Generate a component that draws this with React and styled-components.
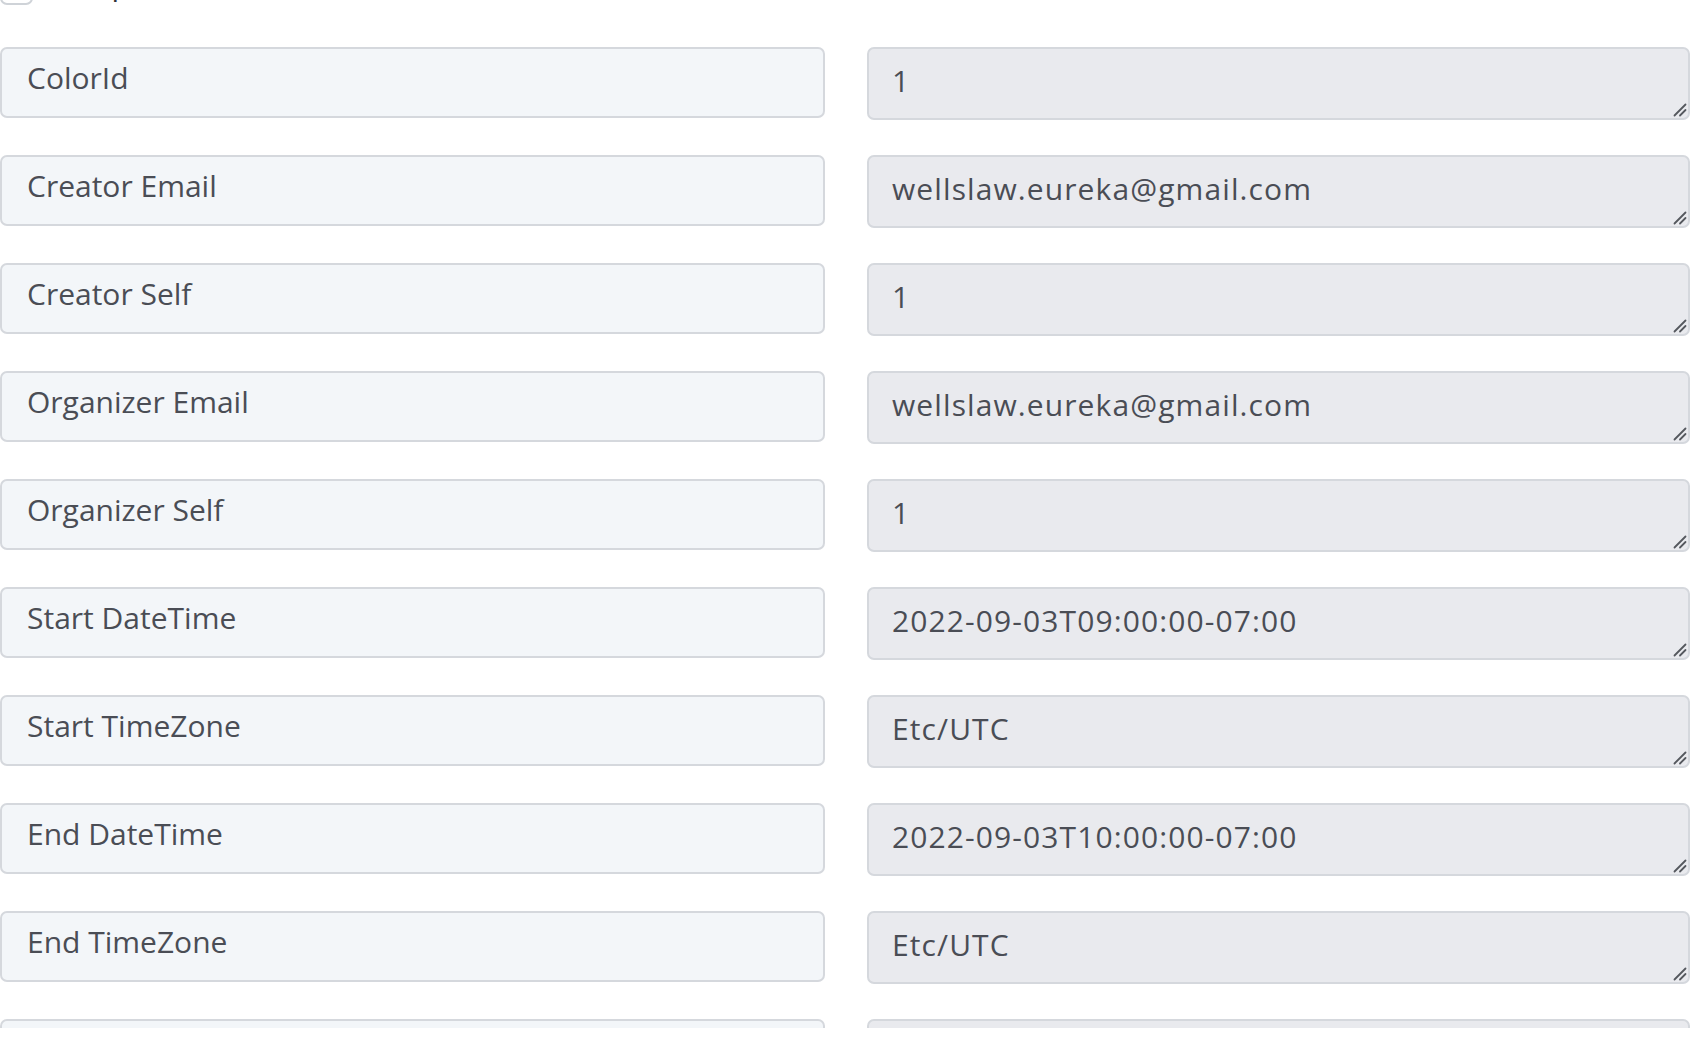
import React from 'react'
import styled, { createGlobalStyle } from 'styled-components'

const GlobalStyle = createGlobalStyle`
  html, body {
    margin: 0;
    padding: 0;
    background: #ffffff;
    overflow: hidden;
  }
  body {
    font-family: 'Open Sans', 'Noto Sans', sans-serif;
    color: #4a4d55;
  }
`

const rows = [
  { label: 'ColorId', value: '1' },
  { label: 'Creator Email', value: 'wellslaw.eureka@gmail.com' },
  { label: 'Creator Self', value: '1' },
  { label: 'Organizer Email', value: 'wellslaw.eureka@gmail.com' },
  { label: 'Organizer Self', value: '1' },
  { label: 'Start DateTime', value: '2022-09-03T09:00:00-07:00' },
  { label: 'Start TimeZone', value: 'Etc/UTC' },
  { label: 'End DateTime', value: '2022-09-03T10:00:00-07:00' },
  { label: 'End TimeZone', value: 'Etc/UTC' },
  { label: 'Location', value: '' }
]

const ResizeHandle = () =>
  <S.Handle width='14' height='14' viewBox='0 0 14 14'>
    <path d='M1.5 12.5 L12.5 1.5 M7 12.5 L12.5 7' stroke='#55585e' strokeWidth='1.8' strokeLinecap='round' />
  </S.Handle>

const App = () =>
  <>
    <GlobalStyle />
    <S.Viewport>
      <S.Scroller>
        <S.CheckRow>
          <S.Check />
          <S.CheckLabel>Group events</S.CheckLabel>
        </S.CheckRow>
        <S.Grid>
          {rows.map(row =>
            <React.Fragment key={row.label}>
              <S.Label>{row.label}</S.Label>
              <S.ValueWrap>
                <S.Value readOnly rows={1} defaultValue={row.value} />
                <ResizeHandle />
              </S.ValueWrap>
            </React.Fragment>
          )}
        </S.Grid>
      </S.Scroller>
    </S.Viewport>
  </>

const S = {
  Viewport: styled.div`
    height: 1028px;
    overflow: hidden;
    padding-right: 12px;
  `,
  Scroller: styled.div`
    margin-top: -25px;
  `,
  CheckRow: styled.div`
    display: flex;
    align-items: flex-start;
    gap: 8px;
    height: 30px;
  `,
  Check: styled.span`
    display: inline-block;
    box-sizing: border-box;
    flex: none;
    width: 33px;
    height: 30px;
    border: 2px solid #cfd3d8;
    border-radius: 7px;
    background: #ffffff;
  `,
  CheckLabel: styled.span`
    font-size: 30px;
    font-weight: 500;
    line-height: 30px;
    margin-top: -6px;
    color: #2f3238;
  `,
  Grid: styled.div`
    display: grid;
    grid-template-columns: 825px 823px;
    column-gap: 42px;
    row-gap: 35px;
    align-items: start;
    margin-top: 42px;
  `,
  Label: styled.div`
    box-sizing: border-box;
    height: 71px;
    padding: 10px 25px 0;
    font-size: 30px;
    font-weight: 500;
    line-height: 38px;
    color: #4a4d55;
    background: #f3f6f9;
    border: 2px solid #d5d8dd;
    border-radius: 7px;
    white-space: nowrap;
  `,
  ValueWrap: styled.div`
    position: relative;
    height: 73px;
  `,
  Value: styled.textarea`
    box-sizing: border-box;
    display: block;
    width: 100%;
    height: 73px;
    margin: 0;
    padding: 13px 23px 0;
    font-family: 'Open Sans', 'Noto Sans', sans-serif;
    font-size: 30px;
    font-weight: 500;
    letter-spacing: 1.1px;
    line-height: 38px;
    color: #4a4d55;
    background: #e9eaee;
    border: 2px solid #d5d8dd;
    border-radius: 7px;
    resize: none;
    outline: none;
    overflow: hidden;
  `,
  Handle: styled.svg`
    position: absolute;
    right: 3px;
    bottom: 3px;
    pointer-events: none;
  `
}

export default App
